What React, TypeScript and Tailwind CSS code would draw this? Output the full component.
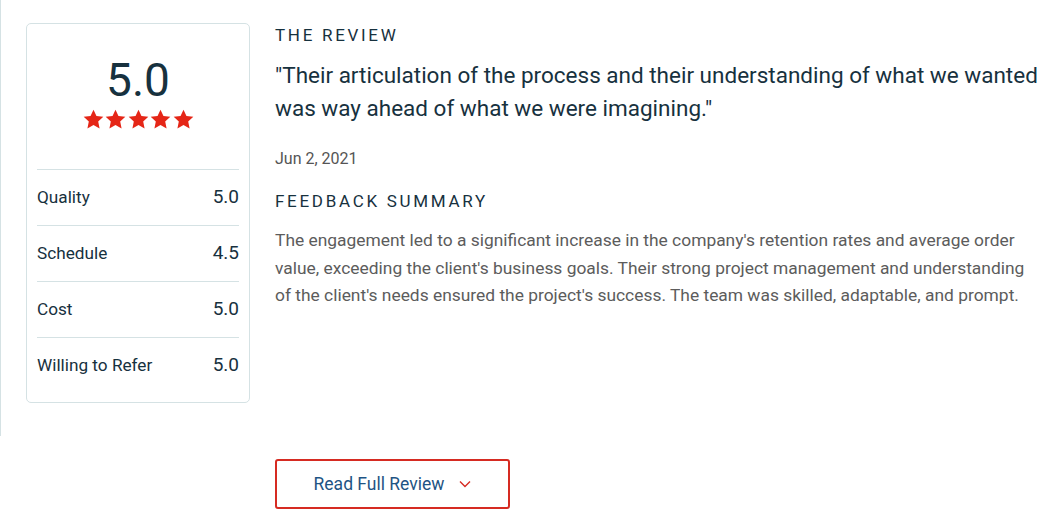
export default function App() {
  const rows = [
    { label: "Quality", value: "5.0" },
    { label: "Schedule", value: "4.5" },
    { label: "Cost", value: "5.0" },
    { label: "Willing to Refer", value: "5.0" },
  ];

  return (
    <div className="w-[1059px] h-[523px] bg-white text-[#17313e]" style={{ fontFamily: "Roboto, 'Liberation Sans', sans-serif" }}>
      <div className="flex">
        <div className="border-l border-[#d5e2e4] h-[436px] pl-[25px] pt-[23px]">
          <div className="w-[224px] h-[380px] border border-[#d5e2e4] rounded-[5px] px-[10px]">
            <div className="flex flex-col items-center pt-[29px] h-[145px]">
              <div className="text-[46px] leading-[54px] text-[#17313e]">5.0</div>
              <div className="flex gap-[1.5px] mt-[2px]">
                {[0, 1, 2, 3, 4].map((i) => (
                  <svg key={i} width="21" height="20" viewBox="0 0 24 23">
                    <path d="M12 0.8l3.4 7.3 7.9.9-5.9 5.4 1.6 7.9L12 18.3l-7 4 1.6-7.9L.7 9l7.9-.9z" fill="#e52617" />
                  </svg>
                ))}
              </div>
            </div>
            {rows.map((r) => (
              <div key={r.label} className="flex items-center justify-between border-t border-[#d5e2e4] h-[56px]">
                <span className="text-[17.2px]">{r.label}</span>
                <span className="text-[19px]">{r.value}</span>
              </div>
            ))}
          </div>
        </div>
        <div className="pl-[25px] pt-[23px] flex-1">
          <div className="text-[17px] tracking-[2.7px] leading-[24px] text-[#17313e]">THE REVIEW</div>
          <p className="text-[22.5px] leading-[33px] mt-[12px] text-[#17313e]">
            "Their articulation of the process and their understanding of what we wanted was way ahead of what we were imagining."
          </p>
          <div className="text-[16px] text-[#555] mt-[22px]">Jun 2, 2021</div>
          <div className="text-[17px] tracking-[2.7px] leading-[24px] mt-[18px] text-[#17313e]">FEEDBACK SUMMARY</div>
          <p className="text-[17.4px] leading-[27.5px] text-[#5c5c5c] mt-[14px] pr-[24px]">
            The engagement led to a significant increase in the company's retention rates and average order value, exceeding the client's business goals. Their strong project management and understanding of the client's needs ensured the project's success. The team was skilled, adaptable, and prompt.
          </p>
        </div>
      </div>
      <div className="pl-[275px] mt-[23px]">
        <button className="w-[235px] h-[50px] border-2 border-[#d62b22] rounded-[3px] flex items-center justify-center gap-[15px] text-[17.5px] text-[#1e5484]">
          <span>Read Full Review</span>
          <svg width="12" height="8" viewBox="0 0 12 8">
            <path d="M1 1.5l5 5 5-5" stroke="#d62b22" strokeWidth="1.4" fill="none" />
          </svg>
        </button>
      </div>
    </div>
  );
}
